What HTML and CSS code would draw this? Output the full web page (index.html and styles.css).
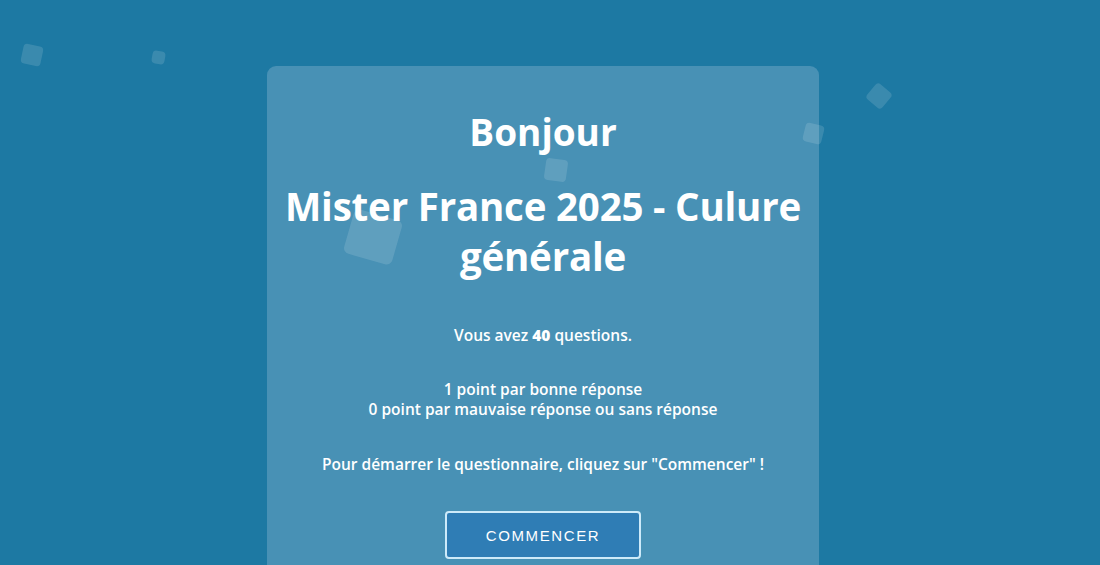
FILE: index.html
```html
<!DOCTYPE html>
<html lang="fr">
<head>
<meta charset="utf-8">
<title>Mister France 2025 - Culure générale</title>
<link rel="stylesheet" href="styles.css">
</head>
<body>
<div class="bg">
  <span class="sq sq1"></span>
  <span class="sq sq2"></span>
  <span class="sq sq3"></span>
  <span class="sq sq4"></span>
  <span class="sq sq5"></span>
  <span class="sq sq6"></span>
</div>
<main class="page">
  <section class="card">
    <h1 class="hello">Bonjour</h1>
    <h2 class="title">Mister France 2025 - Culure générale</h2>
    <p class="info">Vous avez <strong>40</strong> questions.</p>
    <p class="info">1 point par bonne réponse<br>0 point par mauvaise réponse ou sans réponse</p>
    <p class="info last">Pour démarrer le questionnaire, cliquez sur "Commencer" !</p>
    <button class="start">COMMENCER</button>
  </section>
</main>
</body>
</html>
```
FILE: styles.css
```css
html, body {
  margin: 0;
  height: 100%;
  overflow: hidden;
}
body {
  background: #1d79a3;
  font-family: "Open Sans", "Noto Sans", sans-serif;
  color: #ffffff;
}
.bg {
  position: fixed;
  inset: 0;
  z-index: 2;
  pointer-events: none;
}
.sq {
  position: absolute;
  background: rgba(255, 255, 255, 0.13);
  border-radius: 4px;
}
.sq1 { left: 22px; top: 45px; width: 20px; height: 20px; transform: rotate(12deg); }
.sq2 { left: 152px; top: 51px; width: 13px; height: 13px; transform: rotate(10deg); }
.sq3 { left: 348px; top: 214px; width: 50px; height: 46px; transform: rotate(16deg); border-radius: 6px; }
.sq4 { left: 545px; top: 159px; width: 22px; height: 22px; transform: rotate(8deg); }
.sq5 { left: 869px; top: 86px; width: 20px; height: 20px; transform: rotate(40deg); }
.sq6 { left: 804px; top: 124px; width: 19px; height: 19px; transform: rotate(14deg); }

.page {
  display: flex;
  padding: 66px 0 0 267px;
}
.card {
  position: relative;
  z-index: 1;
  width: 552px;
  box-sizing: border-box;
  background: #4891b5;
  border-radius: 9px;
  padding: 40px 12px 40px;
  display: flex;
  flex-direction: column;
  align-items: center;
  text-align: center;
}
.hello {
  margin: 0;
  font-size: 37px;
  line-height: 52px;
  font-weight: 700;
}
.title {
  margin: 23px 0 0;
  font-size: 38.5px;
  line-height: 50px;
  font-weight: 700;
  letter-spacing: -0.2px;
}
.info {
  margin: 0;
  font-size: 15.5px;
  line-height: 20px;
  font-weight: 600;
}
.info strong { font-weight: 800; }
.title + .info { margin-top: 44px; }
.info + .info { margin-top: 34px; }
.info.last { margin-top: 35px; }
.start {
  margin-top: 37px;
  width: 196px;
  height: 48px;
  background: #2f7db5;
  border: 2px solid #cdeaf9;
  border-radius: 4px;
  color: #ffffff;
  font-family: "Liberation Sans", Arial, sans-serif;
  font-size: 15px;
  letter-spacing: 1.6px;
  padding: 0;
}
```
